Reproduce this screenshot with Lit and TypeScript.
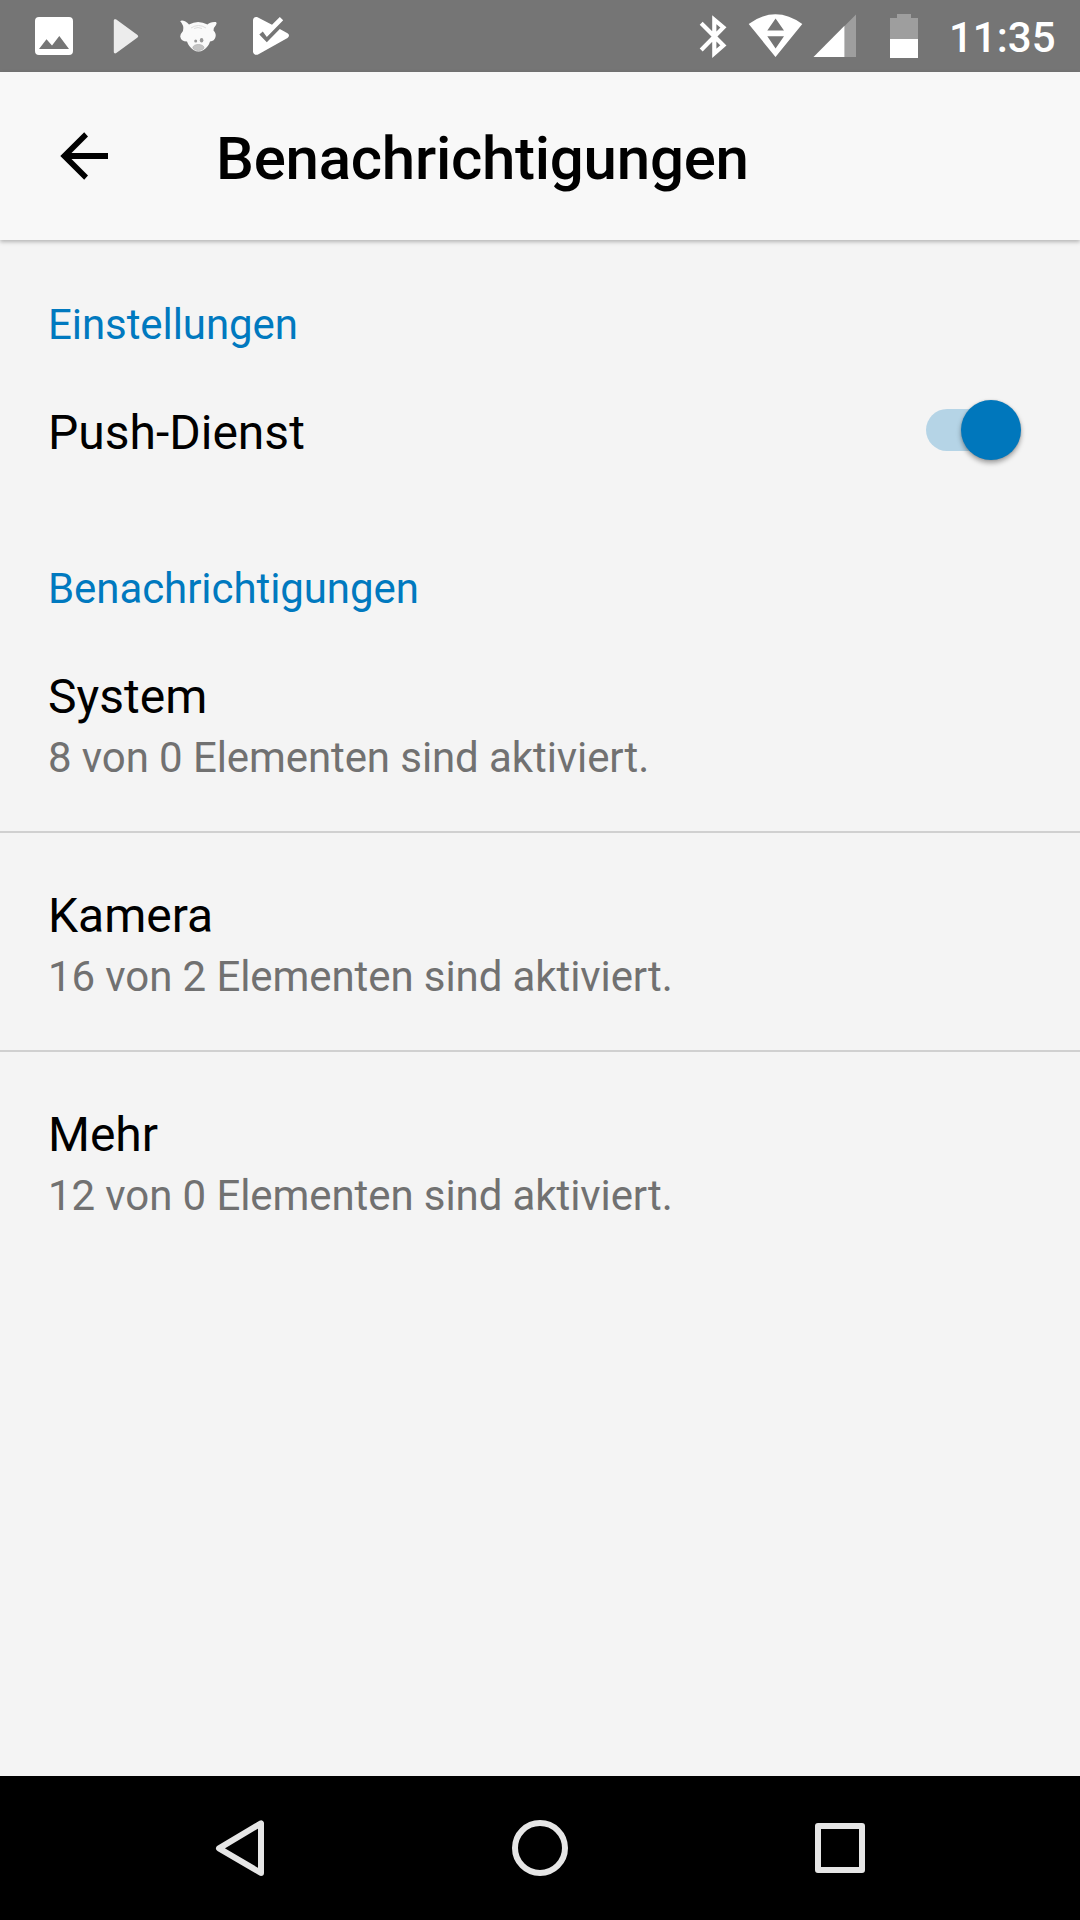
import { LitElement, html, css } from "lit";
import { customElement, property, state } from "lit/decorators.js";

@customElement("status-bar")
class StatusBar extends LitElement {
  static styles = css`
    :host { display: flex; height: 72px; background: #757575; color: #fff; justify-content: space-between; }
    .group { display: flex; align-items: center; height: 72px; }
    svg { display: block; flex: none; }
    .time { width: 131px; padding-top: 3px; font: 500 42px/50px Roboto, sans-serif; white-space: nowrap; }
  `;
  render() {
    return html`
      <div class="group">
        <svg width="320" height="72" viewBox="0 0 320 72">
          <path fill="#fff" fill-rule="evenodd" d="M39 17h30a4 4 0 0 1 4 4v30a4 4 0 0 1-4 4H39a4 4 0 0 1-4-4V21a4 4 0 0 1 4-4zM39 49H69L59.3 36 52 45.500 46.500 39.300z"/>
          <path fill="#ececec" d="M113.800 20.500C113.800 19.200 115.200 18.700 116.300 19.600L137.500 35Q139 36.300 137.500 37.600L116.300 53C115.200 53.900 113.800 53.300 113.800 52z"/>
          <path fill="#fafafa" d="M180.200 21.200Q181.500 19.700 185 21.200Q187.500 22.500 189 24.500Q198 19.300 207.500 24.500Q210 21.500 216 22Q217.300 22.800 216 25Q213.500 27.500 213.500 30.500Q216.500 33.500 215.500 37Q214.500 41 210 41.500Q208.500 47 203.500 50Q198.500 53 193.500 50Q188.500 46.500 187 41.500Q181 41.500 180.200 36.500Q180.200 34 183 31Q184.500 25.500 180.200 21.200z"/>
          <path fill="none" stroke="#dedede" stroke-width="1" d="M191 28q7.500-5 15 0M194 28.500q4-2 8 0"/>
          <ellipse cx="195.700" cy="41" rx="1.500" ry="1.500" fill="#999"/>
          <ellipse cx="201.600" cy="40.200" rx="1.800" ry="2.300" fill="#999"/>
          <ellipse cx="198.400" cy="47.500" rx="5.500" ry="3" fill="#c4c4c4" stroke="#adadad" stroke-width=".7"/>
          <path fill="#fff" d="M253 20.500C253 17.500 255.500 16.300 258 17.500L272 24.800 279.800 17 283.200 20.300 266.800 37 262.800 31.600 259.300 34.600 266.800 42.200 279.800 29 287.500 33.300Q290.500 35.500 287.500 38L258.500 54.300C256 55.600 253 54.500 253 51.500z"/>
        </svg>
      </div>
      <div class="group">
        <svg width="269" height="72" viewBox="680 0 269 72">
          <path fill="none" stroke="#fff" stroke-width="4.200" d="M701.200 23.200 723.400 45.400 714.300 53.300V19.700L723.400 27.500 701.200 50"/>
          <path fill="#fff" fill-rule="evenodd" d="M748.700 24Q775.500 4.500 802.300 24L775.500 57zM767.300 30.500H784L775.600 18.500zM767.300 36.300H784L775.600 48.500z"/>
          <path fill="#9e9e9e" d="M856 14.500V57H844.500V26z"/>
          <path fill="#fff" d="M844.500 25.800V57H813.500z"/>
          <path fill="#9e9e9e" d="M897 14h14v4h7v21h-28V18h7z"/>
          <path fill="#fff" d="M890 39h28v19h-28z"/>
        </svg>
        <div class="time">11:35</div>
      </div>
    `;
  }
}

@customElement("app-bar")
class AppBar extends LitElement {
  @property() heading = "";
  static styles = css`
    :host {
      display: flex; align-items: center; height: 168px; box-sizing: border-box; padding-left: 60px; gap: 108px;
      background: #f8f8f8; box-shadow: 0 2px 4px rgba(0, 0, 0, 0.26); z-index: 1;
    }
    svg { display: block; width: 48px; height: 48px; }
    h1 { margin: 6px 0 0; font: 500 60px/72px Roboto, sans-serif; letter-spacing: -0.25px; color: #000; }
  `;
  render() {
    return html`
      <svg viewBox="0 0 48 48">
        <path d="M48 21v6H11.500L28 43.500 24.200 47.700.300 24 24.200.300 28 4.500 11.500 21z"/>
      </svg>
      <h1>${this.heading}</h1>
    `;
  }
}

@customElement("toggle-switch")
class ToggleSwitch extends LitElement {
  @property({ type: Boolean }) on = false;
  static styles = css`
    :host { display: flex; align-items: center; width: 92px; height: 60px; }
    .track { display: flex; align-items: center; width: 84px; height: 42px; border-radius: 21px; background: #b5d4e6; }
    .thumb {
      flex: none; width: 60px; height: 60px; margin: 0.6px 0 0 35.400px; border-radius: 50%; background: #0077bc;
      box-shadow: 0 3px 5px rgba(0, 0, 0, 0.35), 0 0 2px rgba(0, 0, 0, 0.15);
    }
  `;
  render() {
    return html`<div class="track"><div class="thumb"></div></div>`;
  }
}

@customElement("nav-bar")
class NavBar extends LitElement {
  static styles = css`
    :host { display: flex; height: 144px; background: #000; justify-content: center; }
    svg { display: block; width: 300px; height: 144px; fill: none; stroke: #e6e6e6; stroke-width: 6; stroke-linejoin: round; }
  `;
  render() {
    return html`
      <svg viewBox="90 0 300 144"><path d="M261 47.300V97L219 72.300z"/></svg>
      <svg viewBox="390 0 300 144"><circle cx="540" cy="72" r="25"/></svg>
      <svg viewBox="690 0 300 144"><rect x="818" y="50" width="44" height="44"/></svg>
    `;
  }
}

interface Group { title: string; summary: string; }

@customElement("app-root")
class AppRoot extends LitElement {
  @state() private groups: Group[] = [
    { title: "System", summary: "8 von 0 Elementen sind aktiviert." },
    { title: "Kamera", summary: "16 von 2 Elementen sind aktiviert." },
    { title: "Mehr", summary: "12 von 0 Elementen sind aktiviert." },
  ];
  static styles = css`
    :host {
      display: flex; flex-direction: column; width: 1080px; height: 1920px; overflow: hidden;
      background: #f4f4f4; font-family: Roboto, sans-serif; color: #000;
    }
    main { flex: 1; padding-top: 60px; }
    h2 { margin: 0; padding: 0 48px; font-size: 42px; line-height: 50px; font-weight: 400; letter-spacing: -0.07px; color: #0079bf; }
    .setting {
      display: flex; justify-content: space-between; align-items: center; box-sizing: border-box;
      height: 160px; padding: 0 62px 0 48px; margin-bottom: 54px; font-size: 48px; line-height: 56px;
    }
    .label { padding-top: 5px; }
    .row { box-sizing: border-box; height: 219px; padding: 55px 48px 0; border-bottom: 2px solid #d0d0d0; }
    .row:last-child { border-bottom: none; }
    .title { font-size: 48px; line-height: 56px; }
    .summary { margin-top: 8px; font-size: 42px; line-height: 50px; letter-spacing: -0.09px; color: #717171; }
  `;
  render() {
    return html`
      <status-bar></status-bar>
      <app-bar heading="Benachrichtigungen"></app-bar>
      <main>
        <h2>Einstellungen</h2>
        <div class="setting"><span class="label">Push-Dienst</span><toggle-switch on></toggle-switch></div>
        <h2>Benachrichtigungen</h2>
        <section>
          ${this.groups.map(
            (g) => html`<div class="row"><div class="title">${g.title}</div><div class="summary">${g.summary}</div></div>`
          )}
        </section>
      </main>
      <nav-bar></nav-bar>
    `;
  }
}
